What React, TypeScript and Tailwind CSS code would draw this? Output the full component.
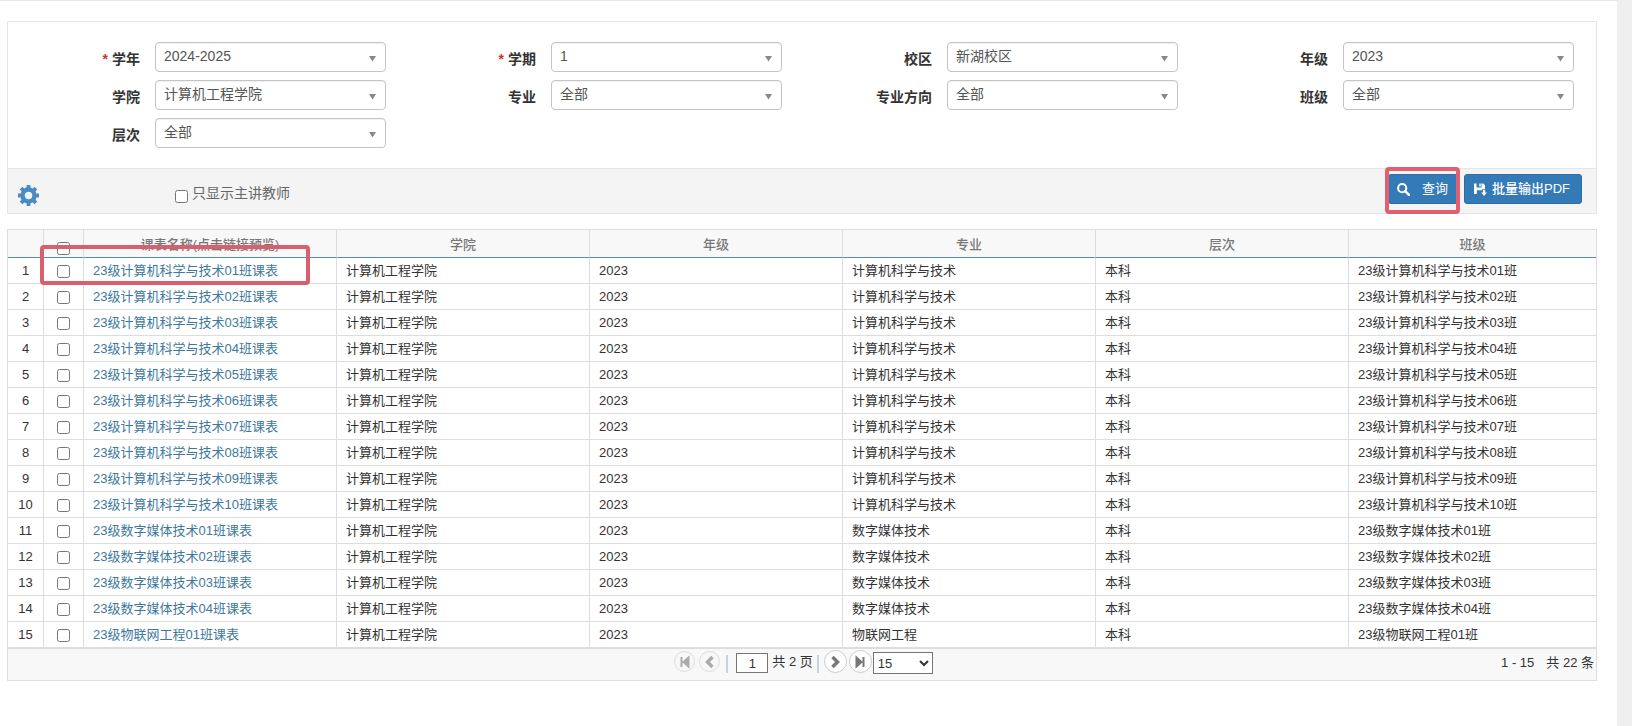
import React, { useState } from 'react';

interface Field {
  id: string;
  label: string;
  value: string;
  required?: boolean;
}

const fields: Field[] = [
  { id: 'xn', label: '学年', value: '2024-2025', required: true },
  { id: 'xq', label: '学期', value: '1', required: true },
  { id: 'xiaoqu', label: '校区', value: '新湖校区' },
  { id: 'nj', label: '年级', value: '2023' },
  { id: 'xy', label: '学院', value: '计算机工程学院' },
  { id: 'zy', label: '专业', value: '全部' },
  { id: 'zyfx', label: '专业方向', value: '全部' },
  { id: 'bj', label: '班级', value: '全部' },
  { id: 'cc', label: '层次', value: '全部' },
];

const majors = [
  { name: '计算机科学与技术', count: 10 },
  { name: '数字媒体技术', count: 4 },
  { name: '物联网工程', count: 1 },
];

const rows = majors.flatMap((major) =>
  Array.from({ length: major.count }, (_, i) => ({
    major: major.name,
    className: `23级${major.name}${String(i + 1).padStart(2, '0')}班`,
  }))
);

const headers = ['课表名称(点击链接预览)', '学院', '年级', '专业', '层次', '班级'];

const GearIcon = () => (
  <svg className="w-[21px] h-[21px] text-[#4a8bc2]" viewBox="0 0 20 20" fill="none" stroke="currentColor">
    <circle cx="10" cy="10" r="5.7" strokeWidth="4.2" />
    <path
      strokeWidth="3.6"
      d="M10 0v4M10 16v4M0 10h4M16 10h4M2.9 2.9l2.5 2.5M14.6 14.6l2.5 2.5M2.9 17.1l2.5-2.5M14.6 5.4l2.5-2.5"
    />
  </svg>
);

const SearchIcon = () => (
  <svg className="w-[13px] h-[13px]" viewBox="0 0 13 13" fill="none" stroke="currentColor">
    <circle cx="5.2" cy="5.2" r="4.1" strokeWidth="2" />
    <path d="M8.2 8.2l3.7 3.7" strokeWidth="2.6" strokeLinecap="round" />
  </svg>
);

const SaveIcon = () => (
  <svg className="w-[13px] h-[13px]" viewBox="0 0 13 13" fill="currentColor">
    <path d="M0 .5h2.5v4h5v-4h1.700L11 2.300V6H8.300v1.200H2.800V11H0z" />
    <path d="M5.300.5h1.500v3H5.300zM9 6.800h2.200v2.700H13l-2.900 3.500-2.900-3.500H9z" />
  </svg>
);

const FieldSelect: React.FC<{ field: Field }> = ({ field }) => (
  <div className="flex items-center h-[38px]">
    <label htmlFor={field.id} className="w-[130px] shrink-0 pt-[3px] text-right text-sm font-bold text-[#333]">
      {field.required && <span className="mr-1 text-[#c33]">*</span>}
      {field.label}
    </label>
    <div className="relative flex-1 ml-[15px] mr-5">
      <select
        id={field.id}
        className="block w-full h-[30px] pl-2 pr-6 pb-[2px] appearance-none rounded border border-[#c4c4c4] bg-white text-sm text-[#555] shadow-[inset_0_1px_1px_rgba(0,0,0,0.06)]"
      >
        <option>{field.value}</option>
      </select>
      <svg className="absolute right-[10px] top-[14px] w-[7px] h-[6px] pointer-events-none" viewBox="0 0 7 6">
        <path d="M0 0h7L3.500 5.500z" fill="#888" />
      </svg>
    </div>
  </div>
);

const pagerIcons = {
  first: 'M3.500 2v10M10.500 2.500L5.500 7l5 4.500z',
  prev: 'M9.500 2L4.500 7l5 5',
  next: 'M4.500 2l5 5-5 5',
  last: 'M10.500 2v10M3.500 2.500L8.500 7l-5 4.500z',
};

const PagerButton: React.FC<{ icon: keyof typeof pagerIcons; title: string; disabled?: boolean }> = ({
  icon,
  title,
  disabled,
}) => (
  <button
    type="button"
    title={title}
    disabled={disabled}
    className={
      disabled
        ? 'flex items-center justify-center w-[21px] h-[21px] rounded-full border border-[#ddd] text-[#aaa]'
        : 'flex items-center justify-center w-[23px] h-[23px] rounded-full border border-[#ccc] bg-white text-[#777]'
    }
  >
    <svg className="w-[14px] h-[14px]" viewBox="0 0 14 14" stroke="currentColor">
      <path
        d={pagerIcons[icon]}
        strokeWidth={icon === 'prev' || icon === 'next' ? 3.4 : 2}
        fill={icon === 'prev' || icon === 'next' ? 'none' : 'currentColor'}
      />
    </svg>
  </button>
);

export default function App() {
  const [selected, setSelected] = useState<number[]>([]);
  const [page, setPage] = useState('1');

  const toggleRow = (i: number) =>
    setSelected(selected.includes(i) ? selected.filter((n) => n !== i) : [...selected, i]);

  return (
    <div className="min-h-screen bg-[#efefef] pr-[15px] text-[13px] text-[#333] font-['Liberation_Sans','Noto_Sans_CJK_SC',sans-serif]">
      <div className="min-h-screen bg-white border-t border-[#e8e8e8] pt-5 pl-[7px] pr-5">
        {/* Filters */}
        <form className="border border-[#e5e5e5]" onSubmit={(e) => e.preventDefault()}>
          <div className="grid grid-cols-4 px-[2px] pt-4 pb-4">
            {fields.map((field) => (
              <FieldSelect key={field.id} field={field} />
            ))}
          </div>

          {/* Toolbar */}
          <div className="flex items-start h-[45px] pl-[10px] pr-[14px] border-t border-[#e5e5e5] bg-[#f4f4f4]">
            <button type="button" title="设置" className="mt-4">
              <GearIcon />
            </button>
            <label className="flex items-center gap-1 mt-[14px] ml-[136px] text-sm text-[#666]">
              <input type="checkbox" className="mt-[6px] w-[13px] h-[13px]" />
              只显示主讲教师
            </label>
            <div className="flex gap-[6px] mt-[5px] ml-auto text-white">
              <div className="relative">
                <button
                  type="submit"
                  className="flex items-center gap-3 h-[30px] pl-2 pr-[9px] rounded-[3px] border border-[#2e6da4] bg-[#337ab7]"
                >
                  <SearchIcon />
                  <span>查询</span>
                </button>
                <div className="absolute -left-[3px] -right-[2px] -top-[7px] -bottom-[10px] rounded border-4 border-[#e0606f] pointer-events-none" />
              </div>
              <button
                type="button"
                className="flex items-center gap-[5px] h-[30px] pl-[9px] pr-[11px] rounded-[3px] border border-[#2e6da4] bg-[#337ab7] font-medium"
              >
                <SaveIcon />
                批量输出PDF
              </button>
            </div>
          </div>
        </form>

        {/* Timetable list */}
        <div className="relative mt-[15px] border border-[#ddd]">
          <table className="w-full table-fixed border-separate border-spacing-0">
            <colgroup>
              <col className="w-9" />
              <col className="w-10" />
              <col className="w-[253px]" />
              <col className="w-[253px]" />
              <col className="w-[253px]" />
              <col className="w-[253px]" />
              <col className="w-[253px]" />
              <col className="w-[247px]" />
            </colgroup>
            <thead>
              <tr className="h-[28px] bg-[#f8f8f8] text-[#777] [&>th]:border-r [&>th]:border-b [&>th]:border-solid [&>th]:[border-color:#ddd_#ddd_#4f8fb3_#ddd] [&>th:last-child]:border-r-0">
                <th className="p-0" />
                <th className="p-0 pt-[10px]">
                  <input
                    type="checkbox"
                    aria-label="全选"
                    className="block mx-auto w-[13px] h-[13px]"
                    checked={selected.length === rows.length}
                    onChange={(e) => setSelected(e.target.checked ? rows.map((_, i) => i) : [])}
                  />
                </th>
                {headers.map((header) => (
                  <th key={header} className="p-0 pt-[3px] leading-5 font-medium">
                    {header}
                  </th>
                ))}
              </tr>
            </thead>
            <tbody className="[&_td]:h-[26px] [&_td]:py-0 [&_td]:border-b [&_td]:border-r [&_td]:border-[#ddd] [&_td:last-child]:border-r-0 leading-5">
              {rows.map((row, i) => (
                <tr key={row.className}>
                  <td className="text-center">{i + 1}</td>
                  <td>
                    <input
                      type="checkbox"
                      aria-label={row.className}
                      className="block mt-[2px] mx-auto w-[13px] h-[13px]"
                      checked={selected.includes(i)}
                      onChange={() => toggleRow(i)}
                    />
                  </td>
                  <td className="px-[9px]">
                    <a href="#preview" className="text-[#40789d]">
                      {row.className}课表
                    </a>
                  </td>
                  <td className="px-[9px]">计算机工程学院</td>
                  <td className="px-[9px]">2023</td>
                  <td className="px-[9px]">{row.major}</td>
                  <td className="px-[9px]">本科</td>
                  <td className="px-[9px]">{row.className}</td>
                </tr>
              ))}
            </tbody>
          </table>

          {/* Pager */}
          <div className="grid grid-cols-[1fr_auto_1fr] h-8 border-t border-[#ddd] bg-[#f8f8f8]">
            <div />
            <div className="flex items-start pt-px pl-[3px]">
              <div className="flex gap-1 mt-px">
                <PagerButton icon="first" title="首页" disabled />
                <PagerButton icon="prev" title="上一页" disabled />
              </div>
              <div className="mx-[6px] mt-[5px] w-[2px] h-[18px] bg-[#ccd3d8]" />
              <input
                type="text"
                aria-label="页码"
                value={page}
                onChange={(e) => setPage(e.target.value)}
                className="ml-[2px] mt-[3px] w-8 h-5 border border-[#767676] bg-white text-center"
              />
              <span className="ml-1 mt-[2px] leading-5 whitespace-nowrap">共 2 页</span>
              <div className="ml-1 mr-[5px] mt-[5px] w-[2px] h-[18px] bg-[#ccd3d8]" />
              <div className="flex gap-[2px]">
                <PagerButton icon="next" title="下一页" />
                <PagerButton icon="last" title="末页" />
              </div>
              <select aria-label="每页条数" className="ml-px mt-[2px] w-[60px] h-[22px] border border-[#767676] bg-white">
                <option>15</option>
              </select>
            </div>
            <div className="flex items-center justify-end gap-3 pr-[2px] pb-1">
              <span>1 - 15</span>
              <span>共 22 条</span>
            </div>
          </div>

          {/* Highlight around the first timetable */}
          <div className="absolute left-8 top-[15px] w-[270px] h-10 rounded border-4 border-[#d95f6c] pointer-events-none" />
        </div>
      </div>
    </div>
  );
}
